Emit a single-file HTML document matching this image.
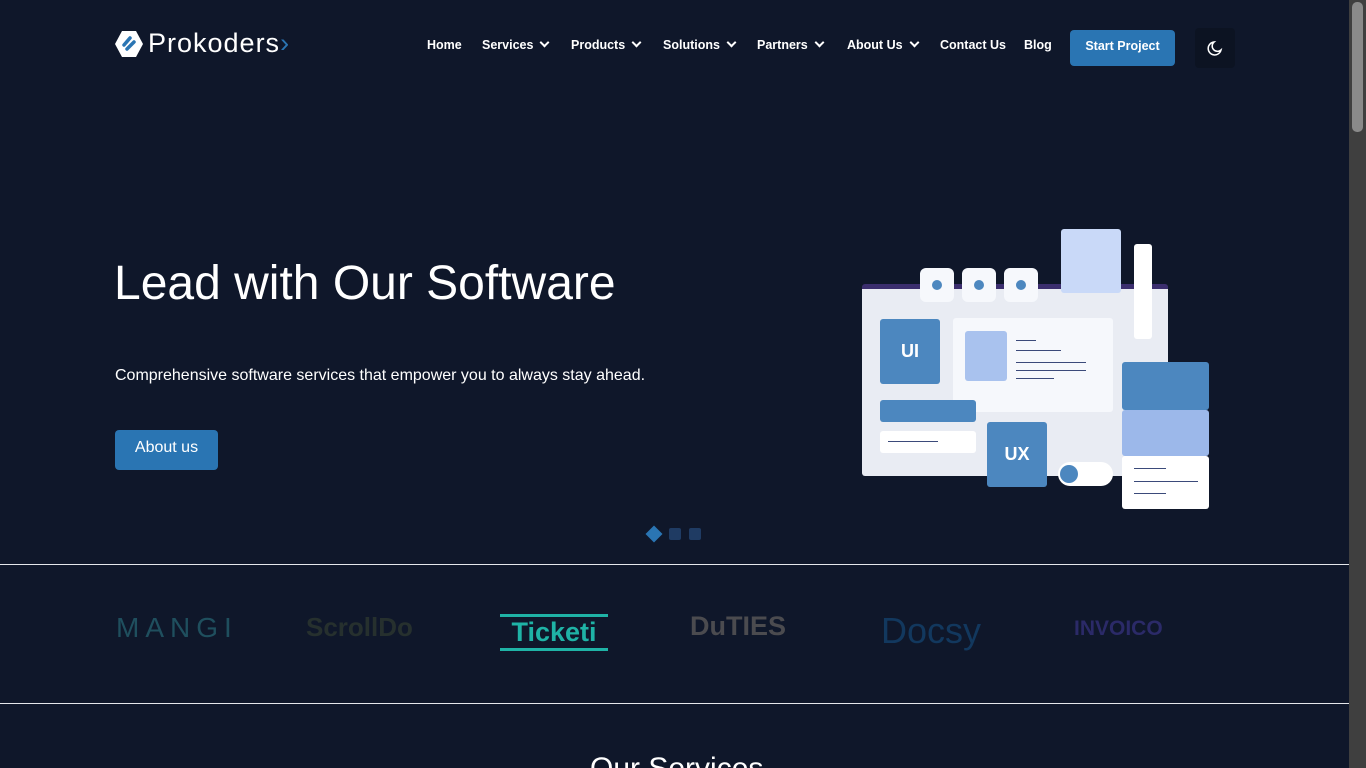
<!DOCTYPE html>
<html><head><meta charset="utf-8"><style>
*{margin:0;padding:0;box-sizing:border-box}
html,body{width:1366px;height:768px;overflow:hidden}
body{background:#0f172a;font-family:"Liberation Sans",sans-serif;color:#fff;position:relative}
.sb{position:absolute;right:0;top:0;width:17px;height:768px;background:#3f3f3f}
.sb i{position:absolute;left:3px;top:2px;width:11px;height:130px;background:#8a8a8a;border-radius:5px}
.nav a{position:absolute;top:38px;font-size:12.5px;font-weight:bold;color:#fff}
.ch{display:inline-block;width:7px;height:7px;border-right:2px solid #fff;border-bottom:2px solid #fff;transform:rotate(45deg);margin-left:8px;position:relative;top:-3px}
.abs{position:absolute}
.card{position:absolute;border-radius:3px}
.ln{position:absolute;height:1px;background:#3b4a7a}
</style></head><body>
<div class="sb"><i></i></div>
<div class="abs" style="left:115px;top:30px;width:28px;height:28px">
<svg width="28" height="28" viewBox="0 0 28 28"><polygon points="7,1 21,1 28,14 21,27 7,27 0,14" fill="#fff"/><path d="M9 15 L15 8 M12 19 L19 12" stroke="#2a75b3" stroke-width="3.5" stroke-linecap="round"/></svg></div>
<div class="abs" style="left:148px;top:28px;font-size:27px;letter-spacing:1px">Prokoders<span style="color:#2a75b3">›</span></div>
<div class="nav">
<a style="left:427px">Home</a>
<a style="left:482px">Services<span class="ch"></span></a>
<a style="left:571px">Products<span class="ch"></span></a>
<a style="left:663px">Solutions<span class="ch"></span></a>
<a style="left:757px">Partners<span class="ch"></span></a>
<a style="left:847px">About Us<span class="ch"></span></a>
<a style="left:940px">Contact Us</a>
<a style="left:1024px">Blog</a>
</div>
<div class="abs" style="left:1070px;top:30px;width:105px;height:36px;background:#2a75b3;border-radius:4px;font-size:12.5px;font-weight:bold;text-align:center;line-height:32px">Start Project</div>
<div class="abs" style="left:1195px;top:28px;width:40px;height:40px;background:#0c1322;border-radius:4px">
<svg width="40" height="40" viewBox="0 0 40 40"><path d="M19 14 A6.5 6.5 0 1 0 26 22 A5 5 0 0 1 19 14 Z" fill="none" stroke="#fff" stroke-width="1.5"/></svg></div>
<div class="abs" style="left:114px;top:256px;font-size:48px">Lead with Our Software</div>
<div class="abs" style="left:115px;top:367px;font-size:16px">Comprehensive software services that empower you to always stay ahead.</div>
<div class="abs" style="left:115px;top:430px;width:103px;height:40px;background:#2a75b3;border-radius:4px;font-size:16px;text-align:center;line-height:36px">About us</div>
<!-- illustration -->
<div class="card" style="left:862px;top:284px;width:306px;height:192px;background:#e9ecf3;border-top:5px solid #3b2e6e"></div>
<div class="card" style="left:953px;top:318px;width:160px;height:94px;background:#f6f8fc"></div>
<div class="card" style="left:965px;top:331px;width:42px;height:50px;background:#a9c2ee"></div>
<div class="ln" style="left:1016px;top:340px;width:20px"></div>
<div class="ln" style="left:1016px;top:350px;width:45px"></div>
<div class="ln" style="left:1016px;top:362px;width:70px"></div>
<div class="ln" style="left:1016px;top:370px;width:70px"></div>
<div class="ln" style="left:1016px;top:378px;width:38px"></div>
<div class="card" style="left:880px;top:319px;width:60px;height:65px;background:#4c87bf;font-weight:bold;font-size:18px;text-align:center;line-height:65px">UI</div>
<div class="card" style="left:880px;top:400px;width:96px;height:22px;background:#4c87bf"></div>
<div class="card" style="left:880px;top:431px;width:96px;height:22px;background:#fff"></div>
<div class="ln" style="left:888px;top:441px;width:50px"></div>
<div class="card" style="left:987px;top:422px;width:60px;height:65px;background:#4c87bf;font-weight:bold;font-size:18px;text-align:center;line-height:65px">UX</div>
<div class="card" style="left:1058px;top:462px;width:55px;height:24px;background:#fff;border-radius:12px"></div>
<div class="abs" style="left:1060px;top:465px;width:18px;height:18px;background:#4c87bf;border-radius:50%"></div>
<div class="card" style="left:1061px;top:229px;width:60px;height:64px;background:#c9d9f8"></div>
<div class="card" style="left:1134px;top:244px;width:18px;height:95px;background:#fff"></div>
<div class="card" style="left:920px;top:268px;width:34px;height:34px;background:#f6f8fc;border-radius:6px"></div>
<div class="card" style="left:962px;top:268px;width:34px;height:34px;background:#f6f8fc;border-radius:6px"></div>
<div class="card" style="left:1004px;top:268px;width:34px;height:34px;background:#f6f8fc;border-radius:6px"></div>
<div class="abs" style="left:932px;top:280px;width:10px;height:10px;background:#4c87bf;border-radius:50%"></div>
<div class="abs" style="left:974px;top:280px;width:10px;height:10px;background:#4c87bf;border-radius:50%"></div>
<div class="abs" style="left:1016px;top:280px;width:10px;height:10px;background:#4c87bf;border-radius:50%"></div>
<div class="card" style="left:1122px;top:362px;width:87px;height:48px;background:#4c87bf"></div>
<div class="card" style="left:1122px;top:410px;width:87px;height:46px;background:#9cb8ea"></div>
<div class="card" style="left:1122px;top:456px;width:87px;height:53px;background:#fff"></div>
<div class="ln" style="left:1134px;top:468px;width:32px"></div>
<div class="ln" style="left:1134px;top:481px;width:64px"></div>
<div class="ln" style="left:1134px;top:493px;width:32px"></div>
<div class="abs" style="left:648px;top:528px;width:12px;height:12px;background:#2a75b3;transform:rotate(45deg)"></div>
<div class="abs" style="left:669px;top:528px;width:12px;height:12px;background:#1f3b63;border-radius:2px"></div>
<div class="abs" style="left:689px;top:528px;width:12px;height:12px;background:#1f3b63;border-radius:2px"></div>
<div class="abs" style="left:0;top:564px;width:1349px;height:1px;background:#e5e7eb"></div>
<div class="abs" style="left:116px;top:612px;font-size:28px;letter-spacing:6px;color:#1f4f5e">MANGI</div>
<div class="abs" style="left:306px;top:612px;font-size:26px;font-weight:bold;color:#26302e">ScrollDo</div>
<div class="abs" style="left:500px;top:614px;width:108px;height:37px;border-top:3px solid #1fb3a6;border-bottom:3px solid #1fb3a6;color:#1fb3a6;font-size:27px;font-weight:bold;text-align:center;line-height:31px">Ticketi</div>
<div class="abs" style="left:690px;top:611px;font-size:27px;font-weight:bold;color:#4b4b4f">DuTIES</div>
<div class="abs" style="left:881px;top:610px;font-size:36px;color:#12385e">Docsy</div>
<div class="abs" style="left:1074px;top:617px;font-size:21px;font-weight:bold;color:#2b2a68">INVOICO</div>
<div class="abs" style="left:0;top:703px;width:1349px;height:1px;background:#e5e7eb"></div>
<div class="abs" style="left:590px;top:752px;font-size:30px">Our Services</div>
</body></html>
